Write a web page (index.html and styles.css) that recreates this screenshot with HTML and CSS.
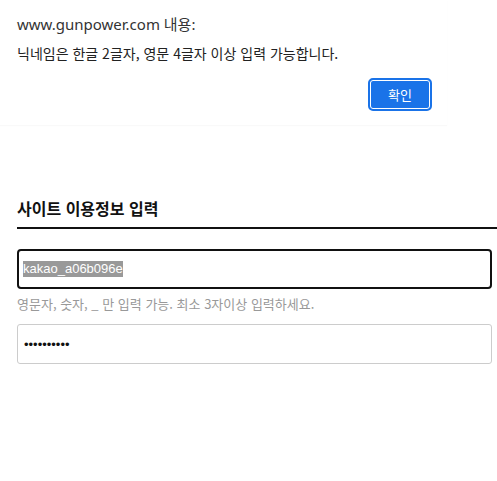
FILE: index.html
```html
<!DOCTYPE html>
<html lang="ko">
<head>
    <meta charset="UTF-8">
    <meta name="viewport" content="width=device-width, initial-scale=1.0">
    <title>사이트 이용정보 입력</title>
    <link rel="stylesheet" href="styles.css">
</head>
<body>
    <!-- 브라우저 알림창 -->
    <div class="alert-box">
        <div class="alert-title">www.gunpower.com 내용:</div>
        <div class="alert-message">닉네임은 한글 2글자, 영문 4글자 이상 입력 가능합니다.</div>
        <div class="alert-actions">
            <button class="alert-btn" type="button">확인</button>
        </div>
    </div>

    <section class="info-section">
        <h2 class="section-title">사이트 이용정보 입력</h2>
        <div class="field field-focus">
            <span class="selected-text">kakao_a06b096e</span>
        </div>
        <p class="field-help">영문자, 숫자, _ 만 입력 가능. 최소 3자이상 입력하세요.</p>
        <div class="field">
            <span class="password-dots">••••••••••</span>
        </div>
    </section>
</body>
</html>
```

FILE: styles.css
```css
body {
    margin: 0;
    background: #ffffff;
    font-family: "Noto Sans", "Noto Sans CJK KR", sans-serif;
    color: #222;
}

/* 알림창 */
.alert-box {
    width: 447px;
    height: 125px;
    box-sizing: border-box;
    padding: 12px 15px 0 17px;
    background: #fff;
    box-shadow: 0 1px 1px rgba(0, 0, 0, 0.025);
}

.alert-title {
    font-size: 15px;
    line-height: 24px;
    color: #333;
}

.alert-message {
    font-family: "Noto Sans CJK KR", sans-serif;
    font-size: 14px;
    line-height: 20px;
    margin-top: 7px;
    color: #222;
}

.alert-actions {
    display: flex;
    justify-content: flex-end;
    margin-top: 15px;
}

.alert-btn {
    width: 64px;
    height: 33px;
    border: 2px solid #1a73e8;
    border-radius: 5px;
    background: #1a73e8;
    box-shadow: inset 0 0 0 1px #fff;
    color: #fff;
    font-family: "Noto Sans CJK KR", sans-serif;
    font-size: 13px;
    padding: 0;
}

/* 이용정보 입력 */
.info-section {
    padding: 72px 0 0 17px;
}

.section-title {
    margin: 0;
    font-family: "Noto Sans CJK KR", sans-serif;
    font-size: 16px;
    font-weight: 700;
    line-height: 22px;
    padding-bottom: 8px;
    border-bottom: 2px solid #111;
    color: #111;
}

.field {
    box-sizing: border-box;
    width: 475px;
    height: 40px;
    margin-top: 20px;
    display: flex;
    align-items: center;
    padding: 0 6px;
    border: 1px solid #ccc;
    border-radius: 3px;
}

.field-focus {
    border: 2px solid #111;
    border-radius: 4px;
    padding: 0 4px;
}

.selected-text {
    font-family: "Liberation Sans", sans-serif;
    font-size: 13px;
    line-height: 16px;
    background: #999;
    color: #fff;
}

.field-help {
    margin: 6px 0 0;
    font-family: "Noto Sans CJK KR", sans-serif;
    font-size: 13px;
    line-height: 18px;
    color: #999;
}

.field-help + .field {
    margin-top: 11px;
}

.password-dots {
    font-family: "Liberation Sans", sans-serif;
    font-size: 13px;
    color: #111;
}
```
